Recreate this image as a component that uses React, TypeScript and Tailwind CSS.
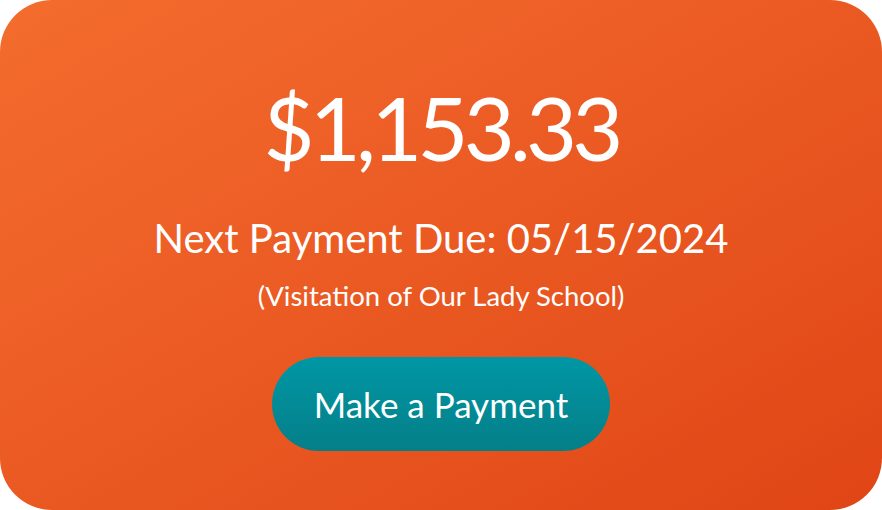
export default function App() {
  return (
    <div className="w-[882px] h-[510px] bg-white">
      <div
        className="w-full h-full rounded-[52px] bg-gradient-to-br from-[#f46c2e] to-[#e04515] flex flex-col items-center text-white"
        style={{ fontFamily: "Lato, 'Noto Sans', sans-serif" }}
      >
        <h1 className="mt-[79px] text-[88px] leading-[96px] font-normal tracking-[-4.8px]">$1,153.33</h1>
        <p className="mt-[39px] text-[40px] leading-[48px]">Next Payment Due: 05/15/2024</p>
        <p className="mt-[18px] text-[27.5px] leading-[32px]">(Visitation of Our Lady School)</p>
        <button className="mt-[45px] w-[338px] h-[94px] rounded-full bg-gradient-to-b from-[#0097a5] to-[#047f88] text-[35px] text-white">
          Make a Payment
        </button>
      </div>
    </div>
  );
}
